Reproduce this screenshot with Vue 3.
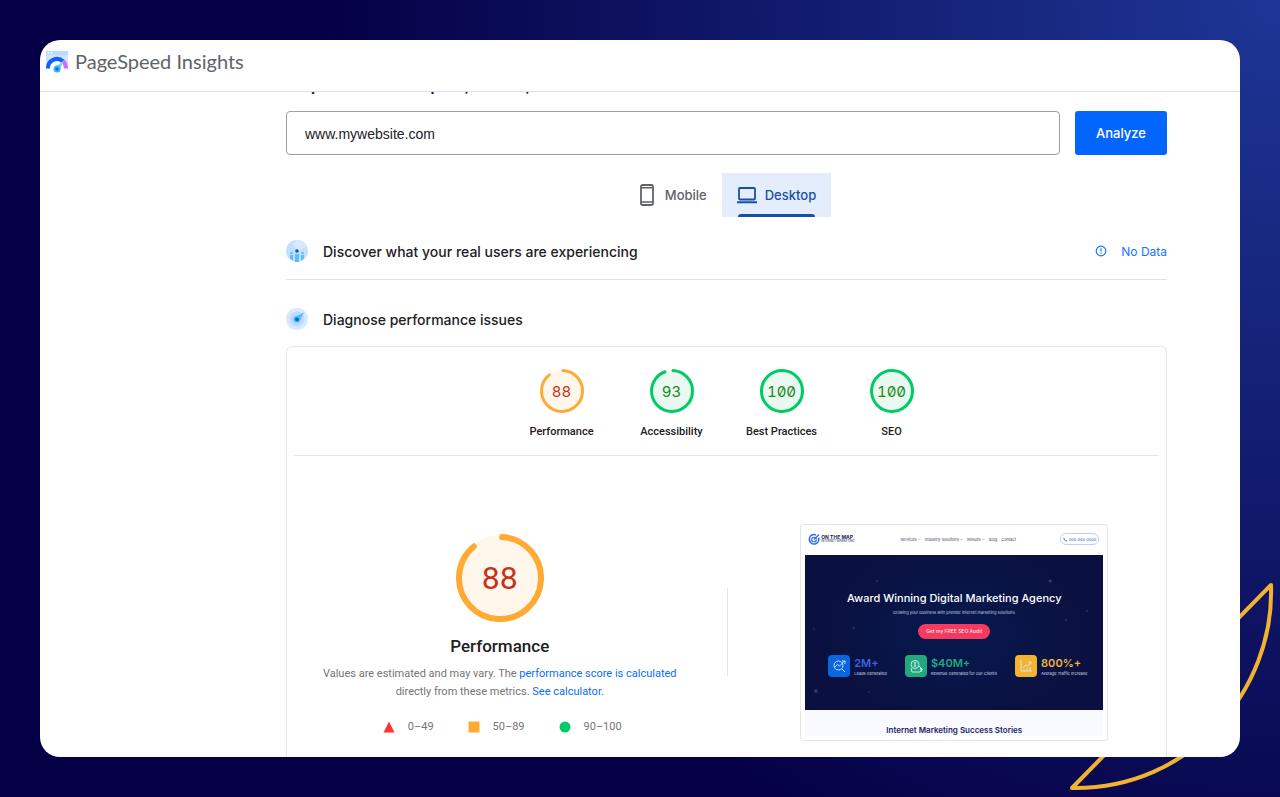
<script setup>
import { ref } from 'vue'

const url = ref('www.mywebsite.com')
const device = ref('desktop')

const gauges = [
  { label: 'Performance', score: 88, tone: 'average' },
  { label: 'Accessibility', score: 93, tone: 'pass' },
  { label: 'Best Practices', score: 100, tone: 'pass' },
  { label: 'SEO', score: 100, tone: 'pass' },
]

function arc(score, radius) {
  const length = 2 * Math.PI * radius
  return score >= 100 ? 'none' : `${(score / 100) * length} ${length}`
}

const siteLinks = [
  { label: 'Services', menu: true },
  { label: 'Industry Solutions', menu: true },
  { label: 'Results', menu: true },
  { label: 'Blog', menu: false },
  { label: 'Contact', menu: false },
]
</script>

<template>
  <div class="backdrop">
    <svg class="leaf" viewBox="0 0 216 220" aria-hidden="true">
      <path d="M207 8C211 113 126 213 8 211Z" />
    </svg>

    <main class="window">
      <header class="topbar">
        <svg class="logo" viewBox="0 0 24 24" aria-hidden="true">
          <path d="M1 2h22v13H1z" fill="#cfe5fd" />
          <path d="M1 2h22v4H1z" fill="#b9dafc" />
          <circle cx="3.500" cy="4" r="1" fill="#f1f8ff" />
          <circle cx="6.500" cy="4" r="1" fill="#f1f8ff" />
          <circle cx="12" cy="19.500" r="8" fill="#fff" />
          <path d="M3 19.500A9 9 0 0 1 18 12.300" fill="none" stroke="#0a62fb" stroke-width="4" />
          <path d="M18 12.300A9 9 0 0 1 21 19.500" fill="none" stroke="#cf6df7" stroke-width="4" />
          <path d="M18.500 12L15 20.500 9.500 18Z" fill="#7fd0fb" />
          <circle cx="12" cy="20" r="3.500" fill="#35b4fa" />
          <circle cx="12" cy="20" r="1.600" fill="#0a62fb" />
        </svg>
        <span class="product">PageSpeed Insights</span>
      </header>

      <div class="content">
        <div class="report-clip"><h1>Report from Sep 11, 2023,</h1></div>

        <form class="search" @submit.prevent>
          <input v-model="url" type="text" aria-label="Web page URL" />
          <button type="submit">Analyze</button>
        </form>

        <div class="tabs" role="tablist">
          <button class="tab" :class="{ active: device === 'mobile' }" role="tab" type="button" @click="device = 'mobile'">
            <svg class="phone" viewBox="0 0 14 22" aria-hidden="true">
              <rect x="1" y="1" width="12" height="20" rx="1.500" fill="none" stroke="currentColor" stroke-width="1.800" />
              <path d="M1 3.800h12M1 18h12" stroke="currentColor" stroke-width="1.600" />
            </svg>
            Mobile
          </button>
          <button class="tab" :class="{ active: device === 'desktop' }" role="tab" type="button" @click="device = 'desktop'">
            <svg class="laptop" viewBox="0 0 20 18" aria-hidden="true">
              <rect x="2" y="2" width="16" height="11.500" rx="1" fill="none" stroke="currentColor" stroke-width="1.800" />
              <path d="M0 16.200h20" stroke="currentColor" stroke-width="2" />
            </svg>
            Desktop
          </button>
        </div>

        <section class="row users">
          <svg class="badge" viewBox="0 0 22 22" aria-hidden="true">
            <circle cx="11" cy="11" r="11" fill="#c5dffc" />
            <path d="M11 0a11 11 0 0 1 10 6L13 11 7 5Z" fill="#d9eafd" />
            <path d="M4 15h3v5.500l-3-2zM9 14h4v8H9zM15 15h3v3.500l-3 2z" fill="#55c3fb" />
            <circle cx="5.500" cy="13" r="1.300" fill="#55c3fb" />
            <circle cx="16.500" cy="13" r="1.300" fill="#55c3fb" />
            <circle cx="11" cy="11" r="1.800" fill="#0a52ee" />
          </svg>
          <h2>Discover what your real users are experiencing</h2>
          <a class="no-data" href="#users">
            <svg viewBox="0 0 12 12" aria-hidden="true">
              <circle cx="6" cy="6" r="4.800" fill="none" stroke="currentColor" stroke-width="1.200" />
              <path d="M6 3.300v3.300M6 7.500v1.200" stroke="currentColor" stroke-width="1.200" />
            </svg>
            No Data
          </a>
        </section>

        <section class="row diagnose">
          <svg class="badge" viewBox="0 0 22 22" aria-hidden="true">
            <circle cx="11" cy="11" r="11" fill="#d7e9fd" />
            <circle cx="11" cy="11" r="7.500" fill="#bfdcfc" />
            <path d="M18 4.500L13.500 13 9 9Z" fill="#4dbcfb" />
            <circle cx="11" cy="11.300" r="3.500" fill="#4dbcfb" />
            <circle cx="11" cy="11.300" r="1.900" fill="#0a5cf5" />
          </svg>
          <h2>Diagnose performance issues</h2>
        </section>

        <section class="card">
          <div class="gauges">
            <a v-for="g in gauges" :key="g.label" class="gauge" :class="g.tone" href="#report">
              <span class="dial">
                <svg viewBox="0 0 44 44" aria-hidden="true">
                  <circle class="fill" cx="22" cy="22" r="21" />
                  <circle class="ring" cx="22" cy="22" r="20.500" :stroke-dasharray="arc(g.score, 20.5)" />
                </svg>
                <span class="score">{{ g.score }}</span>
              </span>
              <span class="label">{{ g.label }}</span>
            </a>
          </div>

          <div class="category">
            <div class="summary">
              <div class="big average">
                <svg viewBox="0 0 88 88" aria-hidden="true">
                  <circle class="fill" cx="44" cy="44" r="43" />
                  <circle class="ring" cx="44" cy="44" r="41" :stroke-dasharray="arc(88, 41)" />
                </svg>
                <span class="score">88</span>
              </div>
              <h3>Performance</h3>
              <p>
                Values are estimated and may vary. The
                <a href="#score">performance score is calculated</a> directly from these metrics.
                <a href="#calculator">See calculator.</a>
              </p>
              <ul class="legend">
                <li><svg viewBox="0 0 12 12" aria-hidden="true"><path d="M6 0.500l5.500 11h-11z" fill="#f33" /></svg>0–49</li>
                <li><svg viewBox="0 0 12 12" aria-hidden="true"><path d="M0.500 0.500h11v11h-11z" fill="#fa3" /></svg>50–89</li>
                <li><svg viewBox="0 0 12 12" aria-hidden="true"><circle cx="6" cy="6" r="5.500" fill="#0c6" /></svg>90–100</li>
              </ul>
            </div>

            <div class="preview">
              <div class="shot">
                <div class="site-nav">
                  <div class="brand">
                    <svg viewBox="0 0 12 12" aria-hidden="true">
                      <circle cx="6" cy="6.300" r="4.700" fill="none" stroke="#2f6be0" stroke-width="1.600" stroke-dasharray="25 5" transform="rotate(-20 6 6)" />
                      <circle cx="6" cy="6.500" r="2.300" fill="none" stroke="#2f6be0" stroke-width="1.100" />
                      <path d="M6 6.500L11 1.500" stroke="#2f6be0" stroke-width="1.200" />
                    </svg>
                    <span class="brand-text"><b>ON THE MAP</b><i>INTERNET MARKETING</i></span>
                  </div>
                  <nav>
                    <span v-for="l in siteLinks" :key="l.label">
                      {{ l.label }}
                      <svg v-if="l.menu" viewBox="0 0 4 4" aria-hidden="true"><path d="M0.500 1.200L2 2.700 3.500 1.200" fill="none" stroke="#667099" stroke-width="0.600" /></svg>
                    </span>
                  </nav>
                  <span class="phone-pill">
                    <svg viewBox="0 0 8 8" aria-hidden="true"><path d="M1.500 1.500C1.500 4.500 3.500 6.500 6.500 6.500" fill="none" stroke="#3464cc" stroke-width="1.600" /></svg>
                    000 000 0000
                  </span>
                </div>
                <div class="hero">
                  <svg class="stars" viewBox="0 0 299 155" preserveAspectRatio="none" aria-hidden="true">
                    <circle cx="246" cy="26" r="1.600" />
                    <circle cx="11" cy="136" r="1.800" />
                    <circle cx="49" cy="73" r="1.500" opacity="0.600" />
                    <circle cx="72" cy="26" r="1.200" opacity="0.600" />
                    <circle cx="262" cy="65" r="1.400" opacity="0.500" />
                    <circle cx="283" cy="56" r="1.200" opacity="0.500" />
                    <circle cx="64" cy="137" r="1.200" opacity="0.500" />
                    <circle cx="9" cy="74" r="1" opacity="0.500" />
                  </svg>
                  <strong class="headline">Award Winning Digital Marketing Agency</strong>
                  <span class="tagline">Growing your business with premier internet marketing solutions.</span>
                  <span class="cta">Get my FREE SEO Audit</span>
                  <div class="stats">
                    <div class="stat blue">
                      <svg viewBox="0 0 22 22" aria-hidden="true">
                        <circle cx="10.500" cy="10.500" r="4.500" />
                        <path d="M14 14l3 3M7 12l2.500-2.500 2 1.500 5-5M14 6h3v3" />
                      </svg>
                      <span><b>2M+</b><small>Leads Generated</small></span>
                    </div>
                    <div class="stat green">
                      <svg viewBox="0 0 22 22" aria-hidden="true">
                        <circle cx="10" cy="9.500" r="4" />
                        <path d="M10 7v5M9 8h2M9 11h2M6 13l1 4h8l2-2-2-2M14 11l4 4M16 13v4" />
                      </svg>
                      <span><b>$40M+</b><small>Revenue Generated for Our Clients</small></span>
                    </div>
                    <div class="stat gold">
                      <svg viewBox="0 0 22 22" aria-hidden="true">
                        <path d="M6 5v11h11M8 13l2.500-3 2 1.500L16 7M13.500 7H16v2.500M9 16v-2M12 16v-3M15 16v-4" />
                      </svg>
                      <span><b>800%+</b><small>Average Traffic Increase</small></span>
                    </div>
                  </div>
                </div>
                <div class="stories">Internet Marketing Success Stories</div>
              </div>
            </div>
          </div>
        </section>
      </div>
    </main>
  </div>
</template>

<style>
body {
  margin: 0;
}
</style>

<style scoped>
.backdrop {
  position: relative;
  box-sizing: border-box;
  height: 100vh;
  padding: 40px;
  overflow: hidden;
  background: radial-gradient(circle 960px at top right, #1e3696, #050045);
  font-family: Inter, "Liberation Sans", sans-serif;
  color: #202124;
}
.leaf {
  position: absolute;
  right: 0;
  bottom: 0;
  width: 216px;
  height: 220px;
}
.leaf path {
  fill: none;
  stroke: #f2b330;
  stroke-width: 4;
  stroke-linejoin: round;
}
.window {
  position: relative;
  display: flex;
  flex-direction: column;
  height: 100%;
  border-radius: 20px;
  background: #fff;
  overflow: hidden;
}
.topbar {
  display: flex;
  align-items: center;
  gap: 6px;
  height: 42px;
  padding: 0 5px 9px;
  border-bottom: 1px solid #dfe1e5;
}
.logo {
  width: 24px;
  height: 24px;
}
.product {
  font-family: Lato, sans-serif;
  font-size: 20px;
  color: #5f6368;
}
.content {
  flex: 1;
  display: flex;
  flex-direction: column;
  min-height: 0;
  margin: 0 73px 0 246px;
}
.report-clip {
  display: flex;
  align-items: flex-end;
  height: 4px;
  margin-bottom: 15px;
  overflow: hidden;
  flex: none;
}
h1 {
  margin: 0;
  font-size: 20px;
  font-weight: 500;
  line-height: 26px;
  white-space: nowrap;
}
.search {
  display: flex;
  gap: 15px;
}
.search input {
  flex: 1;
  box-sizing: border-box;
  height: 44px;
  padding: 1px 18px 0;
  border: 1px solid #9aa0a6;
  border-radius: 4px;
  font: 14px "Liberation Sans", sans-serif;
  color: #202124;
}
.search button {
  width: 92px;
  border: 0;
  border-radius: 3px;
  background: #0265fe;
  color: #fff;
  font: 500 13px Inter, sans-serif;
}
.tabs {
  display: flex;
  justify-content: center;
  margin-top: 18px;
  padding-left: 3px;
}
.tab {
  position: relative;
  display: flex;
  align-items: center;
  gap: 8px;
  height: 44px;
  padding: 0 15px;
  border: 0;
  background: none;
  color: #5f6368;
  font: 500 13px Inter, sans-serif;
}
.tab.active {
  background: #e3edfc;
  color: #174ea6;
}
.tab.active::after {
  content: "";
  position: absolute;
  left: 16px;
  right: 16px;
  bottom: 0;
  height: 3px;
  border-radius: 3px 3px 0 0;
  background: #174ea6;
}
.phone {
  width: 14px;
  height: 22px;
  margin-right: 3px;
}
.laptop {
  width: 20px;
  height: 18px;
}
.row {
  display: flex;
  align-items: center;
  gap: 15px;
}
.users {
  height: 56px;
  margin-top: 6px;
  border-bottom: 1px solid #dfe1e5;
}
.diagnose {
  height: 54px;
  margin-top: 12px;
}
.badge {
  width: 22px;
  height: 22px;
}
h2 {
  flex: 1;
  margin: 0;
  font-size: 14px;
  font-weight: 500;
}
.no-data {
  display: flex;
  align-items: center;
  gap: 14px;
  color: #1a73ff;
  font-size: 12px;
  text-decoration: none;
}
.no-data svg {
  width: 12px;
  height: 12px;
}
.card {
  flex: 1;
  border: 1px solid #e3e5e8;
  border-bottom: 0;
  border-radius: 6px 6px 0 0;
  font-family: Roboto, sans-serif;
}
.gauges {
  display: grid;
  grid-template-columns: repeat(4, 110px);
  justify-content: center;
  height: 86px;
  margin: 0 7px;
  padding-top: 22px;
  border-bottom: 1px solid #e3e5e8;
}
.gauge {
  display: flex;
  flex-direction: column;
  align-items: center;
  gap: 11px;
  color: #212121;
  font-size: 11px;
  font-weight: 500;
  line-height: 16px;
  text-decoration: none;
}
.dial,
.big {
  display: grid;
  place-items: center;
}
.dial > *,
.big > * {
  grid-area: 1 / 1;
}
.dial svg {
  width: 44px;
  height: 44px;
  overflow: visible;
}
.ring {
  fill: none;
  stroke-width: 3;
  stroke-linecap: round;
  transform: rotate(-87deg);
  transform-origin: center;
}
.average .fill {
  fill: #fff6ec;
}
.average .ring {
  stroke: #fa3;
}
.average .score {
  color: #c7321a;
}
.pass .fill {
  fill: #e9f8f0;
}
.pass .ring {
  stroke: #0c6;
}
.pass .score {
  color: #188a18;
}
.dial .score {
  font: 400 15px Inter, sans-serif;
  font-feature-settings: "zero", "tnum";
}
.category {
  display: grid;
  grid-template-columns: 1fr 1fr;
  padding-top: 68px;
}
.summary {
  display: flex;
  flex-direction: column;
  align-items: center;
  padding: 10px 14px 0 0;
}
.big svg {
  width: 88px;
  height: 88px;
}
.big .ring {
  stroke-width: 6;
}
.big .score {
  font-size: 32px;
}
h3 {
  margin: 12px 0 0;
  font-size: 17px;
  font-weight: 500;
  line-height: 24px;
}
.summary p {
  width: 360px;
  margin: 7px 0 0;
  color: #757575;
  font-size: 11px;
  line-height: 18px;
  text-align: center;
}
.summary a {
  color: #0b6cff;
  text-decoration: none;
}
.legend {
  display: flex;
  gap: 34px;
  margin: 18px 0 0;
  padding: 0 0 0 5px;
  list-style: none;
  color: #757575;
  font-size: 11px;
  line-height: 16px;
}
.legend li {
  display: flex;
  align-items: center;
  gap: 13px;
}
.legend svg {
  width: 12px;
  height: 12px;
}
.preview {
  display: flex;
  justify-content: center;
  padding-left: 16px;
  background: linear-gradient(#e3e5e8, #e3e5e8) left 64px / 1px 88px no-repeat;
}
.shot {
  box-sizing: border-box;
  width: 308px;
  padding: 4px;
  border: 1px solid #e6e6e8;
  border-radius: 3px;
  font-family: Inter, sans-serif;
}
.site-nav {
  display: flex;
  align-items: center;
  justify-content: space-between;
  height: 20px;
  padding: 0 4px 6px 3px;
}
.brand {
  display: flex;
  align-items: center;
  gap: 1px;
}
.brand svg {
  width: 12px;
  height: 12px;
}
.brand-text {
  display: flex;
  flex-direction: column;
  color: #1b2456;
}
.brand-text b {
  font-size: 5px;
  font-weight: 700;
  line-height: 5px;
}
.brand-text i {
  font-size: 3px;
  font-style: normal;
  line-height: 3px;
}
.site-nav nav {
  display: flex;
  gap: 4px;
  margin-left: 2px;
  color: #3c4470;
  font-size: 4px;
}
.site-nav nav svg {
  width: 3px;
  height: 3px;
}
.phone-pill {
  display: flex;
  align-items: center;
  gap: 1px;
  height: 10px;
  padding: 0 2px;
  border: 1px solid #c2d0ee;
  border-radius: 6px;
  color: #3464cc;
  font-size: 4px;
}
.phone-pill svg {
  width: 5px;
  height: 5px;
}
.hero {
  position: relative;
  display: flex;
  flex-direction: column;
  align-items: center;
  box-sizing: border-box;
  height: 155px;
  padding-top: 35px;
  background: radial-gradient(ellipse 45% 60% at center, #07194f, #0a1140);
  color: #fff;
}
.stars {
  position: absolute;
  inset: 0;
  width: 100%;
  height: 100%;
  fill: #4c5c96;
  opacity: 0.6;
}
.headline {
  font-size: 11px;
  font-weight: 500;
  line-height: 16px;
}
.tagline {
  margin-top: 4px;
  color: #c6cbe0;
  font-size: 4px;
  line-height: 6px;
}
.cta {
  margin-top: 8px;
  padding: 0 8px;
  border-radius: 8px;
  background: #f43a5e;
  color: #ffe0e6;
  font-size: 5px;
  font-weight: 500;
  line-height: 15px;
}
.stats {
  display: flex;
  justify-content: space-between;
  align-self: stretch;
  margin: 16px 16px 0 23px;
}
.stat {
  display: flex;
  align-items: center;
  gap: 4px;
}
.stat > svg {
  width: 22px;
  height: 22px;
  border-radius: 4px;
  fill: none;
  stroke: #d5ebff;
  stroke-width: 0.9;
}
.stat span {
  display: flex;
  flex-direction: column;
}
.stat b {
  font-size: 11px;
  font-weight: 600;
  line-height: 14px;
}
.stat small {
  color: #d9dcea;
  font-size: 4px;
  line-height: 7px;
}
.blue > svg {
  background: #0a66dc;
}
.blue b {
  color: #3b64e0;
}
.green > svg {
  background: #22a97b;
}
.green b {
  color: #25a77d;
}
.gold > svg {
  background: #f5b130;
}
.gold b {
  color: #efb23c;
}
.stories {
  height: 26px;
  background: #f8faff;
  color: #1b1f5c;
  font-size: 8px;
  font-weight: 600;
  line-height: 41px;
  text-align: center;
  overflow: hidden;
}
</style>
